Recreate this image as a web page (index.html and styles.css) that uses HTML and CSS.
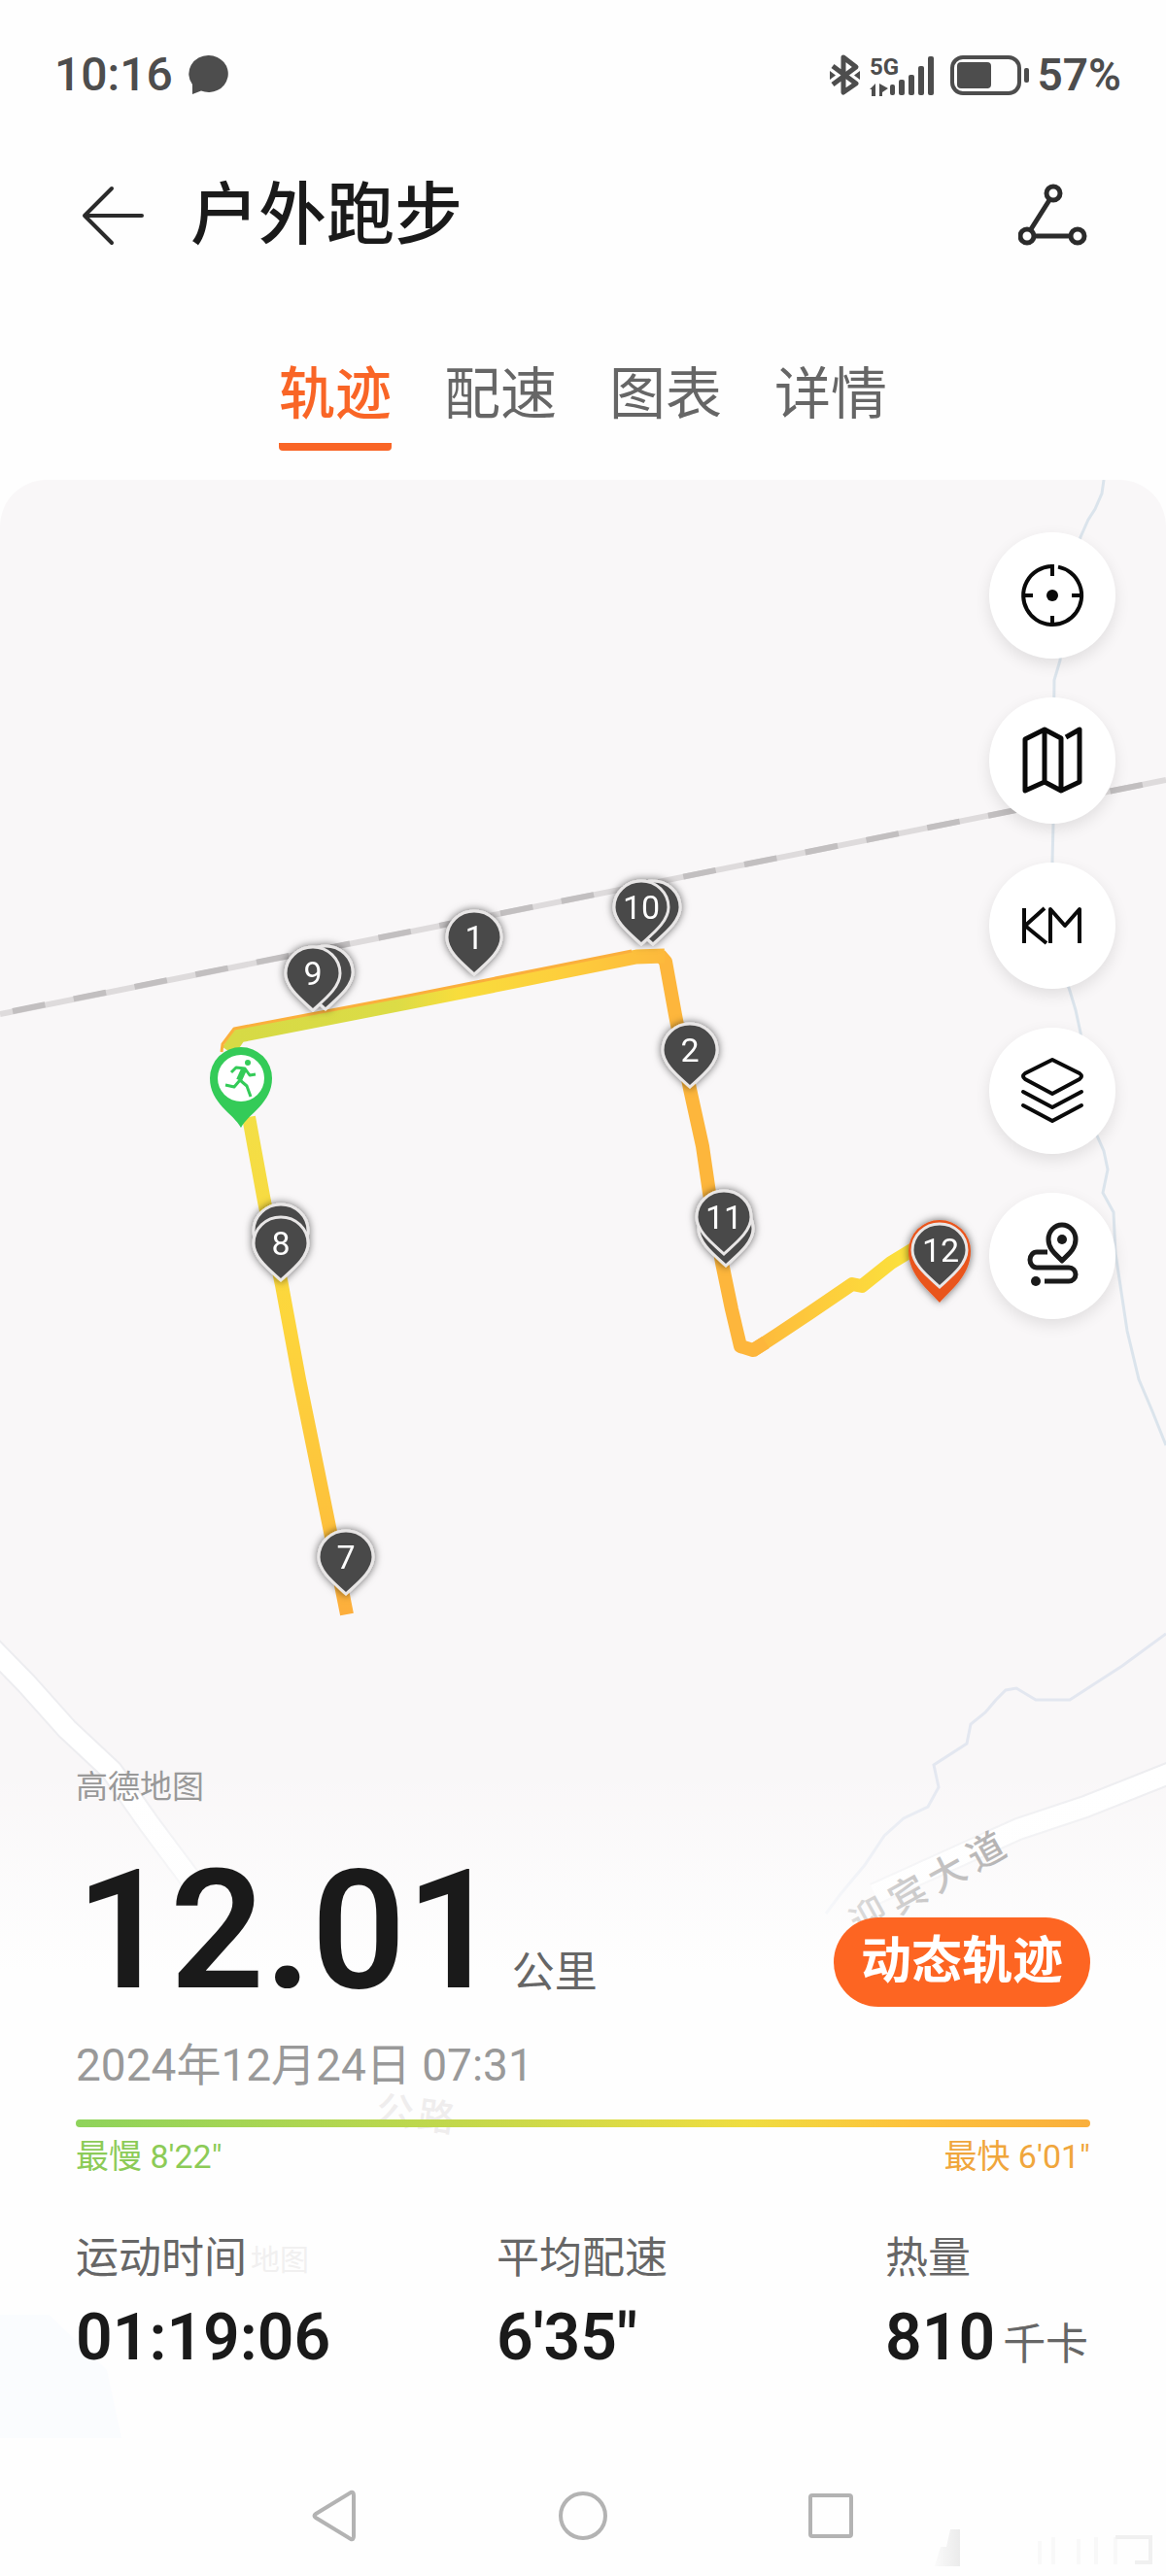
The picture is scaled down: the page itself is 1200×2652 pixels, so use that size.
FILE: index.html
```html
<!DOCTYPE html>
<html lang="zh-CN">
<head>
<meta charset="utf-8">
<meta name="viewport" content="width=device-width, initial-scale=1">
<title>户外跑步</title>
<link rel="stylesheet" href="styles.css">
</head>
<body>
<div class="status">
  <span class="status-group">
    <span class="status-text">10:16</span>
    <svg width="42" height="42" viewBox="0 0 42 42" aria-hidden="true"><path d="M21 1a20 19 0 1 1-8 36.500L4 41 4 31A20 19 0 0 1 21 1Z" fill="#4d4d4d"/></svg>
  </span>
  <span class="status-group">
    <svg class="status-icons" width="208" height="44" viewBox="853 53 208 44" aria-hidden="true">
      <g fill="none" stroke="#4d4d4d" stroke-width="4" stroke-linejoin="round">
        <path d="M858 66 882 84 869 93V57L882 67 858 85" stroke-width="5"/>
        <rect x="981" y="57" width="69" height="37" rx="11"/>
      </g>
      <g fill="#4d4d4d">
        <path d="M855 71 861 75.500 855 80ZM886 71 880 75.500 886 80Z"/>
        <path d="M896 90 902 84V97H898V90ZM906 84V97H909V93L915 89Z"/>
        <rect x="917" y="85" width="5" height="11" rx="2"/>
        <rect x="926" y="80" width="6" height="16" rx="2"/>
        <rect x="936" y="75" width="6" height="21" rx="2"/>
        <rect x="946" y="66" width="6" height="30" rx="2"/>
        <rect x="956" y="56" width="6" height="40" rx="2"/>
        <rect x="986" y="62" width="35" height="27" rx="4"/>
        <rect x="1055" y="68" width="5" height="15" rx="2"/>
        <text class="net" x="896" y="75">5G</text>
      </g>
    </svg>
    <span class="status-text">57%</span>
  </span>
</div>

<header class="header">
  <button class="icon-button" aria-label="返回">
    <svg width="68" height="64" viewBox="0 0 68 64"><path d="M35 4 7 32 35 60M7 32H66" fill="none" stroke="#2b2b2b" stroke-width="4" stroke-linecap="round" stroke-linejoin="round"/></svg>
  </button>
  <h1 class="title">户外跑步</h1>
  <button class="icon-button" aria-label="分享">
    <svg width="74" height="66" viewBox="0 0 74 66" fill="none" stroke="#2b2b2b" stroke-width="5"><circle cx="36" cy="10" r="7"/><circle cx="9" cy="54" r="7"/><circle cx="61" cy="54" r="7"/><path d="M32 17 13 47M17 54H53"/></svg>
  </button>
</header>

<nav class="tabs">
  <a class="tab tab-active" href="#track">轨迹</a>
  <a class="tab" href="#pace">配速</a>
  <a class="tab" href="#chart">图表</a>
  <a class="tab" href="#detail">详情</a>
</nav>

<main class="map" id="track">
  <svg class="map-canvas" viewBox="0 494 1200 2158" preserveAspectRatio="xMidYMin slice" aria-hidden="true">
    <defs>
      <linearGradient id="fade" x1="0" y1="1820" x2="0" y2="2030" gradientUnits="userSpaceOnUse">
        <stop offset="0" stop-color="#fefefe" stop-opacity="0"/><stop offset="1" stop-color="#fefefe"/>
      </linearGradient>
      <linearGradient id="label-fade" x1="0" y1="0" x2="180" y2="0" gradientUnits="userSpaceOnUse">
        <stop offset="0" stop-color="#dddcdc"/><stop offset="1" stop-color="#b3b1b1"/>
      </linearGradient>
      <linearGradient id="north" x1="240" y1="0" x2="685" y2="0" gradientUnits="userSpaceOnUse">
        <stop offset="0" stop-color="#d6da45"/><stop offset=".38" stop-color="#dcdc46"/><stop offset=".52" stop-color="#f8dd3c"/><stop offset=".75" stop-color="#fdcf3c"/><stop offset="1" stop-color="#fdb93c"/>
      </linearGradient>
      <linearGradient id="west" x1="0" y1="1150" x2="0" y2="1662" gradientUnits="userSpaceOnUse">
        <stop offset="0" stop-color="#f3df46"/><stop offset=".4" stop-color="#fdd63c"/><stop offset=".8" stop-color="#fdc23c"/><stop offset="1" stop-color="#fdae3c"/>
      </linearGradient>
      <linearGradient id="east" x1="770" y1="0" x2="940" y2="0" gradientUnits="userSpaceOnUse">
        <stop offset="0" stop-color="#fdb63c"/><stop offset=".5" stop-color="#fdcf3c"/><stop offset="1" stop-color="#fbe23c"/>
      </linearGradient>
      <filter id="shadow" x="-40%" y="-40%" width="180%" height="180%"><feDropShadow dx="0" dy="0" stdDeviation="4" flood-color="#000" flood-opacity=".6"/></filter>
      <path id="pin" d="M0 36C-8 28-28 14-28-2A28 27 0 0 1 28-2C28 14 8 28 0 36Z" fill="#4a4a4a" stroke="#e8e6e6" stroke-width="3"/>
    </defs>

    <g fill="none" stroke="#dbe4ec" stroke-width="3">
      <path d="M1136 494 1134 508 1127 524 1120 535 1112 553 1094 640 1091 680 1085 700 1084 780 1084 848 1083 888 1094 1000 1101 1020 1107 1040 1112 1063 1125 1160 1136 1185 1140 1204 1135 1228 1146 1248 1148 1290 1160 1370 1172 1420 1186 1453 1200 1488"/>
      <path d="M1200 1682 1155 1715 1101 1750H1066L1046 1738 1035 1740 1025 1750 1014 1763 999 1775 995 1795 961 1817 966 1840 955 1860 930 1872 910 1890 890 1920 865 1950 850 1970" stroke="#e3e7f0"/>
    </g>
    <g fill="none" stroke-linejoin="round">
      <g stroke="#ededf0" stroke-width="24">
        <path d="M-15 1690 27 1733 69 1780 115 1823 153 1877 200 1940"/>
        <path d="M1215 1821 1117 1860 1048 1883 900 1950"/>
      </g>
      <g stroke="#fff" stroke-width="20">
        <path d="M-15 1690 27 1733 69 1780 115 1823 153 1877 200 1940"/>
        <path d="M1215 1821 1117 1860 1048 1883 900 1950"/>
      </g>
    </g>
    <path d="M0 1044 1200 803" stroke="#dedbdc" stroke-width="6"/>
    <path d="M13 1041 1200 803" stroke="#c2bfc0" stroke-width="6" stroke-dasharray="34 30"/>

    <rect y="1820" width="1200" height="832" fill="url(#fade)"/>
    <text class="road" x="0 46 92 138" transform="translate(884 1994) rotate(-29)" fill="url(#label-fade)">迎宾大道</text>
    <text class="road" x="0 43" transform="translate(386 2184) rotate(8)" fill="#efeded">公路</text>
    <text class="place" x="258 288" y="2337">地图</text>
    <path d="M0 2383H50L110 2440 125 2510H0Z" fill="#fafcfe"/>

    <g fill="none" stroke-linejoin="round" stroke-width="14">
      <path d="M774 1391 800 1374 833 1352 877 1322 887 1324 917 1300 940 1286" stroke="url(#east)" stroke-width="14"/>
      <path d="M679 983 685 990 695 1045 710 1121 723 1180 730 1228 743 1300 753 1348 762 1386 775 1390 788 1382" stroke="#fdb63c"/>
      <path d="M235 1082 246 1066 420 1032 560 1004 655 985 684 984" stroke="url(#north)" stroke-width="15"/>
      <path d="M228 1083 229 1075 241 1059 420 1025 560 997 650 979" stroke="#fbaf3c" stroke-width="3"/>
      <path d="M256 1150 272 1237 290 1323 308 1420 327 1513 340 1577 357 1662" stroke="url(#west)"/>
    </g>

    <g class="pins" filter="url(#shadow)">
      <use href="#pin" x="335" y="1003"/><use href="#pin" x="322" y="1004"/>
      <use href="#pin" x="488" y="967"/>
      <use href="#pin" x="672" y="936"/><use href="#pin" x="660" y="936"/>
      <use href="#pin" x="710" y="1083"/>
      <use href="#pin" x="747" y="1267"/><use href="#pin" x="745" y="1255"/>
      <use href="#pin" x="289" y="1269"/><use href="#pin" x="289" y="1282"/>
      <use href="#pin" x="356" y="1605"/>
      <path d="M967 1341C958 1330 935 1314 935 1288A32 32 0 0 1 999 1288C999 1314 976 1330 967 1341Z" fill="#e9541d"/>
      <use href="#pin" x="967" y="1289"/>
    </g>
    <g class="pin-labels">
      <text x="322" y="1014">9</text><text x="488" y="977">1</text><text x="660" y="946">10</text><text x="710" y="1093">2</text>
      <text x="745" y="1265">11</text><text x="289" y="1292">8</text><text x="356" y="1615">7</text><text x="968" y="1299">12</text>
    </g>
    <g>
      <path d="M248 1161C240 1146 216 1136 216 1110A32 32 0 0 1 280 1110C280 1136 256 1146 248 1161Z" fill="#34cb58"/>
      <circle cx="248" cy="1110" r="24" fill="#fff"/>
      <circle cx="255" cy="1094" r="3" fill="#34cb58"/>
      <path d="M238 1104 243 1099 252 1100 247 1112 254 1118 258 1129M252 1100 257 1107 263 1106M247 1112 241 1119 232 1117" fill="none" stroke="#34cb58" stroke-width="3" stroke-linejoin="round"/>
      <path d="M251 1101 246 1112" stroke="#34cb58" stroke-width="6"/>
    </g>
  </svg>

  <div class="tools">
    <button class="tool" aria-label="定位">
      <svg width="70" height="70" viewBox="-35 -35 70 70" fill="none" stroke="#0a0a0a" stroke-width="4"><path d="M6-29.400A30 30 0 1 1-2-29.900M0-32V-20M0 30V21M-30 0H-20M30 0H20"/><circle r="6" fill="#0a0a0a" stroke="none"/></svg>
    </button>
    <button class="tool" aria-label="地图类型">
      <svg width="70" height="74" viewBox="-35 -37 70 74" fill="none" stroke="#0a0a0a" stroke-width="5" stroke-linejoin="round"><path d="M-28-22-8-32 9-23V31L-8 22-28 31ZM-8-32V22M14-24 28-32V22L9 31"/></svg>
    </button>
    <button class="tool" aria-label="公里标记">
      <svg width="70" height="70" viewBox="-35 -35 70 70" fill="none" stroke="#0a0a0a" stroke-width="4" stroke-linejoin="round"><path d="M-29-18V18M-8-18-28 0-6 18M-2 18V-17L13 0 28-17V18"/></svg>
    </button>
    <button class="tool" aria-label="图层">
      <svg width="70" height="74" viewBox="-35 -37 70 74" fill="none" stroke="#0a0a0a" stroke-width="4" stroke-linejoin="round" stroke-linecap="round"><path d="M0-32 28-18Q32-15 28-12L0 3-28-12Q-32-15-28-18ZM-30 1 0 17 30 1M-30 15 0 31 30 15"/></svg>
    </button>
    <button class="tool" aria-label="路线">
      <svg width="70" height="74" viewBox="-35 -37 70 74" fill="none" stroke="#1a1a1a" stroke-width="5" stroke-linejoin="round"><path d="M10 5C6 0-4-6-4-17A14 15 0 0 1 24-17C24-6 14 0 10 5ZM-5-4H-16A7 8 0 0 0-16 12H17A7 7 0 0 1 17 26H-8"/><circle cx="10" cy="-17" r="5" fill="#1a1a1a" stroke="none"/><circle cx="-17" cy="26" r="5" fill="#1a1a1a" stroke="none"/></svg>
    </button>
  </div>

  <section class="summary">
    <p class="provider">高德地图</p>
    <div class="distance-row">
      <p class="distance"><span class="distance-value">12.01</span><span class="unit">公里</span></p>
      <button class="replay">动态轨迹</button>
    </div>
    <p class="date">2024年12月24日 07:31</p>
    <div class="pace-bar"></div>
    <div class="pace-range"><span class="slow">最慢 8'22"</span><span class="fast">最快 6'01"</span></div>
    <dl class="stats">
      <div><dt>运动时间</dt><dd>01:19:06</dd></div>
      <div><dt>平均配速</dt><dd>6'35"</dd></div>
      <div><dt>热量</dt><dd>810<span class="unit stat-unit">千卡</span></dd></div>
    </dl>
  </section>
</main>

<footer class="system-nav">
  <button class="icon-button" aria-label="后退"><svg width="56" height="56" viewBox="0 0 56 56"><path d="M9 26 45 4Q48 3 48 7V49Q48 53 45 52L9 30Q6 28 9 26Z"/></svg></button>
  <button class="icon-button" aria-label="主页"><svg width="56" height="56" viewBox="0 0 56 56"><circle cx="28" cy="28" r="23"/></svg></button>
  <button class="icon-button" aria-label="最近任务"><svg width="56" height="56" viewBox="0 0 56 56"><rect x="6" y="7" width="42" height="42" rx="2"/></svg></button>
  <svg class="corner-mark" width="230" height="42" viewBox="0 0 230 42" aria-hidden="true">
    <defs><linearGradient id="mark"><stop offset="0" stop-color="#fafafa"/><stop offset="1" stop-color="#ebebeb"/></linearGradient></defs>
    <path d="M2 40 8 20H14L18 2H28V40Z" fill="url(#mark)"/>
    <path d="M110 14V38M124 10V38M150 12V38M168 10V38M188 38V10" stroke="#f8f8f8" stroke-width="4"/>
    <path d="M188 10H224V36H208" stroke="#f0f0f0" stroke-width="4"/>
  </svg>
</footer>
</body>
</html>
```

FILE: styles.css
```css
* { box-sizing: border-box; margin: 0; padding: 0; }
body { min-height: 100vh; background: #fefefe; color: #1a1a1a; font-family: Roboto, "Noto Sans CJK SC", sans-serif; }
button { border: 0; background: none; font: inherit; color: inherit; }
svg { display: block; }
a { color: inherit; text-decoration: none; }

.status { display: flex; justify-content: space-between; align-items: center; height: 154px; padding: 0 46px 0 56px; }
.status-group { display: flex; align-items: center; gap: 16px; }
.status-group:last-child { gap: 8px; }
.status-text { color: #4d4d4d; font-size: 48px; font-weight: 500; line-height: 56px; }
.status-group:last-child .status-text { font-size: 46px; font-weight: 600; }
.net { font-size: 24px; font-weight: 700; }

.header { display: flex; align-items: center; height: 136px; padding: 0 78px 0 80px; }
.icon-button { display: flex; }
.title { flex: 1; margin-left: 48px; font-size: 70px; font-weight: 500; line-height: 100px; }

.tabs { display: flex; justify-content: center; gap: 54px; height: 204px; padding-top: 72px; }
.tab { height: 102px; color: #666; font-size: 58px; line-height: 88px; }
.tab-active { border-bottom: 8px solid #f96526; border-radius: 4px; color: #f96526; font-weight: 500; }

.map { position: relative; overflow: hidden; border-radius: 48px 48px 0 0; background: #f9f7f8; }
.map-canvas { position: absolute; inset: 0; width: 100%; height: 100%; }
.road { font-size: 38px; font-weight: 500; }
.place { fill: #f1f0f0; font-size: 30px; }
.pin-labels { fill: #fff; font-size: 34px; text-anchor: middle; }
.tools { position: relative; display: flex; flex-direction: column; align-items: flex-end; gap: 40px; padding: 54px 52px 0; }
.tool { display: grid; place-items: center; width: 130px; height: 130px; border-radius: 50%; background: #fff; box-shadow: 0 6px 16px rgba(0, 0, 0, .1); }

.summary { position: relative; margin-top: 458px; padding: 0 78px 72px; }
.provider { color: #999; font-size: 33px; line-height: 48px; }
.distance-row { display: flex; justify-content: space-between; align-items: flex-end; height: 202px; }
.distance { display: flex; align-items: baseline; gap: 12px; }
.distance-value { font-size: 170px; font-weight: 600; line-height: 156px; }
.unit { color: #666; font-size: 44px; font-weight: 400; }
.replay { height: 92px; padding: 0 28px; border-radius: 46px; background: #fd6522; color: #fff; font-size: 52px; font-weight: 600; line-height: 92px; }
.date { margin-top: 28px; color: #999; font-size: 46px; line-height: 64px; }
.pace-bar { height: 8px; margin-top: 24px; border-radius: 4px; background: linear-gradient(90deg, #8ed35b, #c3d84b 38%, #efdd40 66%, #fdc23c 82%, #f9af3c); }
.pace-range { display: flex; justify-content: space-between; font-size: 34px; line-height: 60px; }
.slow { color: #8ccb57; }
.fast { color: #f0a63c; }
.stats { display: grid; grid-template-columns: 433fr 400fr 211fr; margin-top: 43px; }
.stats dt { color: #666; font-size: 44px; line-height: 64px; }
.stats dd { margin-top: 10px; font-size: 66px; font-weight: 600; line-height: 80px; white-space: nowrap; }
.stat-unit { margin-left: 8px; }

.system-nav { position: relative; display: flex; justify-content: center; align-items: center; gap: 200px; height: 128px; fill: none; stroke: #b3b3b3; stroke-width: 4; }
.corner-mark { position: absolute; right: 10px; bottom: 10px; stroke: none; }
```
